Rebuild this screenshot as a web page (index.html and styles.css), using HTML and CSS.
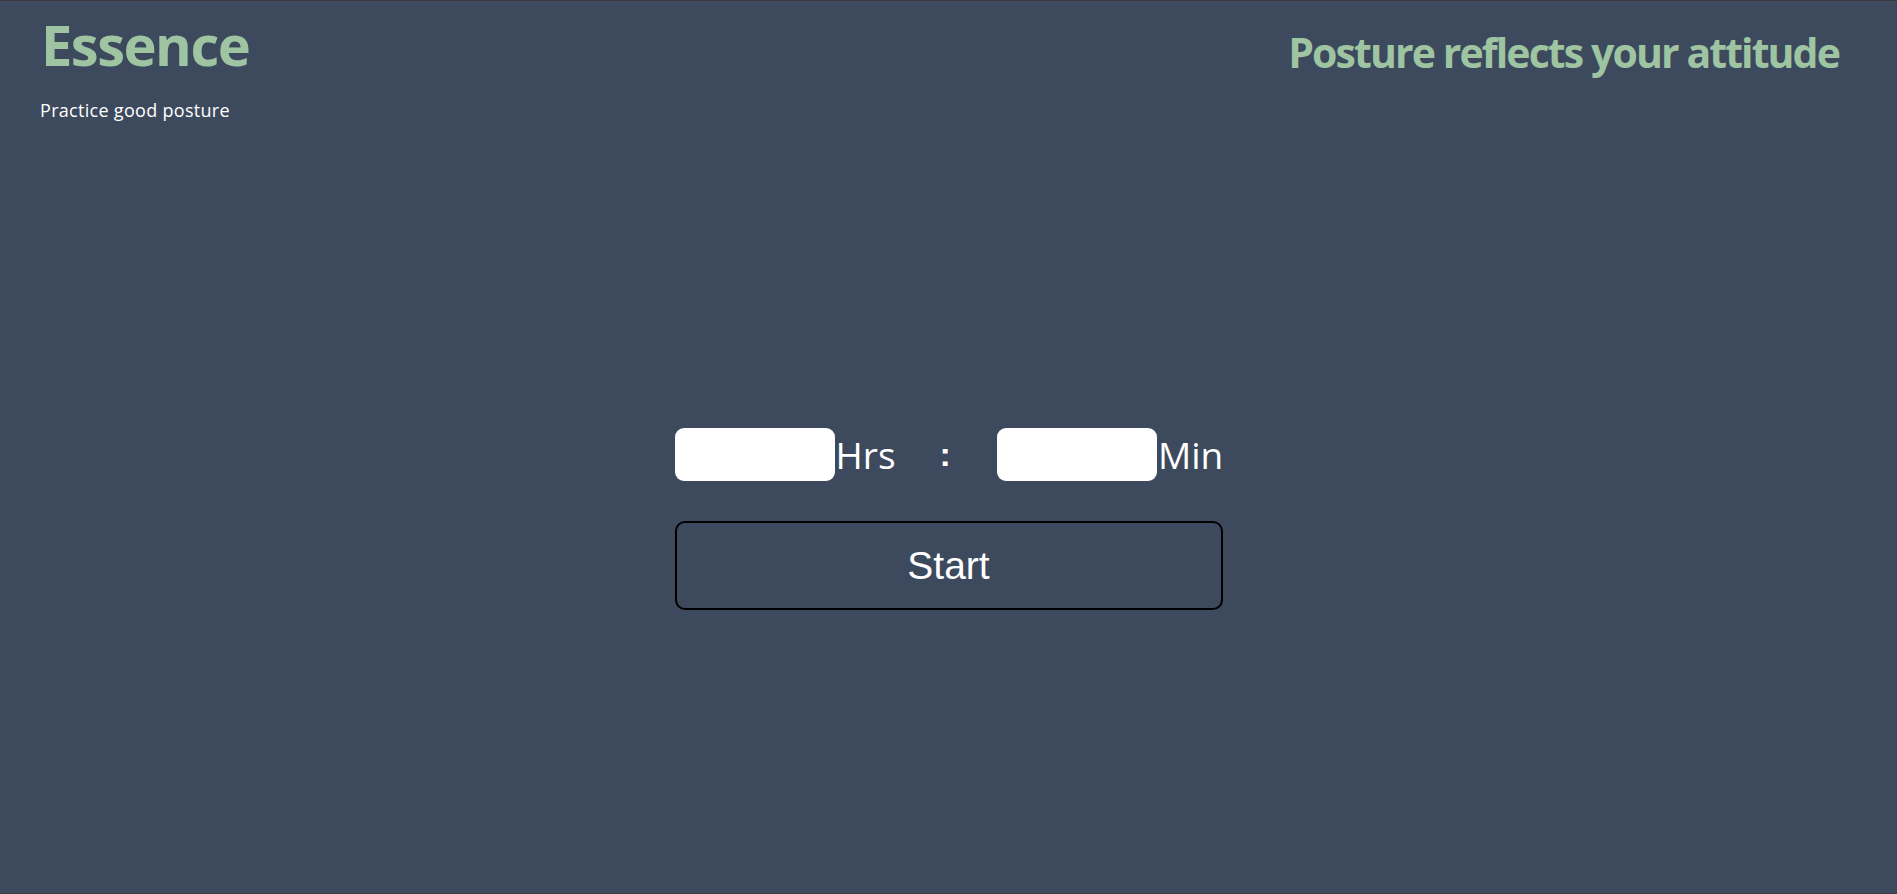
FILE: index.html
```html
<!DOCTYPE html>
<html lang="en">
<head>
<meta charset="utf-8">
<title>Essence</title>
<link rel="stylesheet" href="styles.css">
</head>
<body>
<div class="page">
  <header class="header">
    <div class="brand">
      <h1 class="logo">Essence</h1>
      <p class="sub">Practice good posture</p>
    </div>
    <h2 class="tagline">Posture reflects your attitude</h2>
  </header>
  <main class="main">
    <div class="timer">
      <div class="row">
        <div class="group">
          <input class="field" type="text" aria-label="Hours">
          <span class="unit">Hrs</span>
        </div>
        <span class="colon">:</span>
        <div class="group">
          <input class="field" type="text" aria-label="Minutes">
          <span class="unit">Min</span>
        </div>
      </div>
      <button class="start" type="button">Start</button>
    </div>
  </main>
</div>
</body>
</html>
```

FILE: styles.css
```css
html, body {
  margin: 0;
  padding: 0;
  height: 100%;
}

body {
  background: #3d4a5d;
  font-family: "Open Sans", "Noto Sans", sans-serif;
  color: #ffffff;
  overflow: hidden;
}

.page {
  box-sizing: border-box;
  height: 894px;
  border-top: 1px solid #3a3a3c;
  border-bottom: 1px solid #3a3a3c;
  display: flex;
  flex-direction: column;
}

.header {
  display: flex;
  justify-content: space-between;
  align-items: flex-start;
  padding: 10px 58px 0 40px;
}

.logo {
  margin: 0 0 0 1px;
  font-size: 56px;
  line-height: 67px;
  font-weight: 700;
  color: #9ec4a2;
  letter-spacing: -1.5px;
}

.sub {
  margin: 21px 0 0 0;
  font-size: 18px;
  line-height: 22px;
  letter-spacing: 0.3px;
  color: #ffffff;
}

.tagline {
  margin: 17px 0 0 0;
  font-size: 41px;
  line-height: 48px;
  font-weight: 700;
  color: #9ec4a2;
  letter-spacing: -1.9px;
}

.main {
  display: flex;
  justify-content: center;
  padding-top: 307px;
}

.timer {
  width: 548px;
  display: flex;
  flex-direction: column;
}

.row {
  display: flex;
  align-items: center;
  height: 53px;
}

.group {
  display: flex;
  align-items: center;
}

.field {
  box-sizing: border-box;
  width: 160px;
  height: 53px;
  border: none;
  border-radius: 9px;
  background: #ffffff;
  padding: 0 10px;
  font-size: 24px;
  outline: none;
}

.unit {
  font-size: 37px;
  line-height: 53px;
  margin-left: 1px;
  color: #ffffff;
}

.colon {
  font-family: "Liberation Sans", Arial, sans-serif;
  font-size: 34px;
  font-weight: 700;
  line-height: 53px;
  margin: 0 46px 0 44px;
  color: #ffffff;
}

.start {
  box-sizing: border-box;
  margin-top: 40px;
  width: 548px;
  height: 89px;
  border: 2px solid #000000;
  border-radius: 10px;
  background: transparent;
  color: #ffffff;
  font-family: "Liberation Sans", Arial, sans-serif;
  font-size: 39px;
  cursor: pointer;
}
```
